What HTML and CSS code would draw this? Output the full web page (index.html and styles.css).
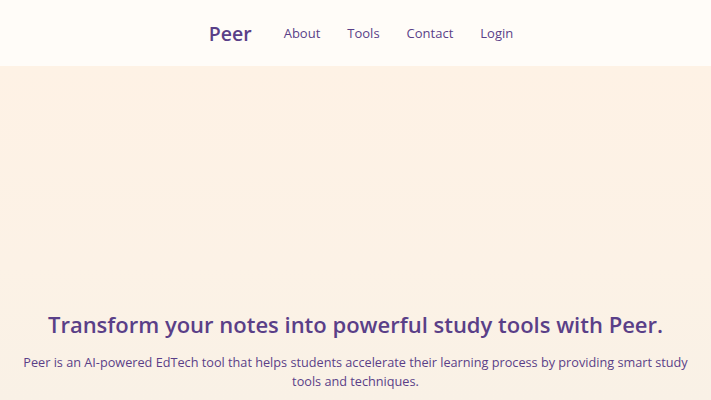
FILE: index.html
```html
<!DOCTYPE html>
<html lang="en">
<head>
<meta charset="utf-8">
<title>Peer</title>
<link rel="stylesheet" href="styles.css">
</head>
<body>
<header class="site-header">
  <nav class="nav">
    <a class="logo" href="#">Peer</a>
    <a class="nav-link" href="#">About</a>
    <a class="nav-link" href="#">Tools</a>
    <a class="nav-link" href="#">Contact</a>
    <a class="nav-link" href="#">Login</a>
  </nav>
</header>
<main class="hero">
  <h1 class="hero-title">Transform your notes into powerful study tools with Peer.</h1>
  <p class="hero-text">Peer is an AI-powered EdTech tool that helps students accelerate their learning process by providing smart study tools and techniques.</p>
</main>
</body>
</html>
```
FILE: styles.css
```css
html, body {
  margin: 0;
  padding: 0;
}
body {
  font-family: "Open Sans", "Noto Sans", sans-serif;
  color: #5a3f88;
  background: #fcf3e8;
  height: 400px;
  overflow: hidden;
}
.site-header {
  height: 66px;
  background: #fffcf8;
  display: flex;
  align-items: center;
  justify-content: center;
}
.nav {
  display: flex;
  align-items: center;
  gap: 27px;
  margin-left: 11px;
}
.nav a {
  text-decoration: none;
  color: #5a3f88;
}
.logo {
  font-size: 19.5px;
  font-weight: 600;
  margin-right: 5px;
}
.nav-link {
  font-size: 13px;
  font-weight: 500;
}
.hero {
  height: 334px;
  background: linear-gradient(180deg, #fef2e5 0%, #fcf2e6 60%, #f9f1e6 100%);
  display: flex;
  flex-direction: column;
  justify-content: flex-end;
  align-items: center;
  text-align: center;
  padding: 0 12px;
  box-sizing: border-box;
}
.hero-title {
  margin: 0 0 13px;
  font-size: 22px;
  font-weight: 600;
  line-height: 32px;
}
.hero-text {
  margin: 0 0 9px;
  font-size: 12.7px;
  font-weight: 500;
  line-height: 19px;
  max-width: 690px;
}
```
